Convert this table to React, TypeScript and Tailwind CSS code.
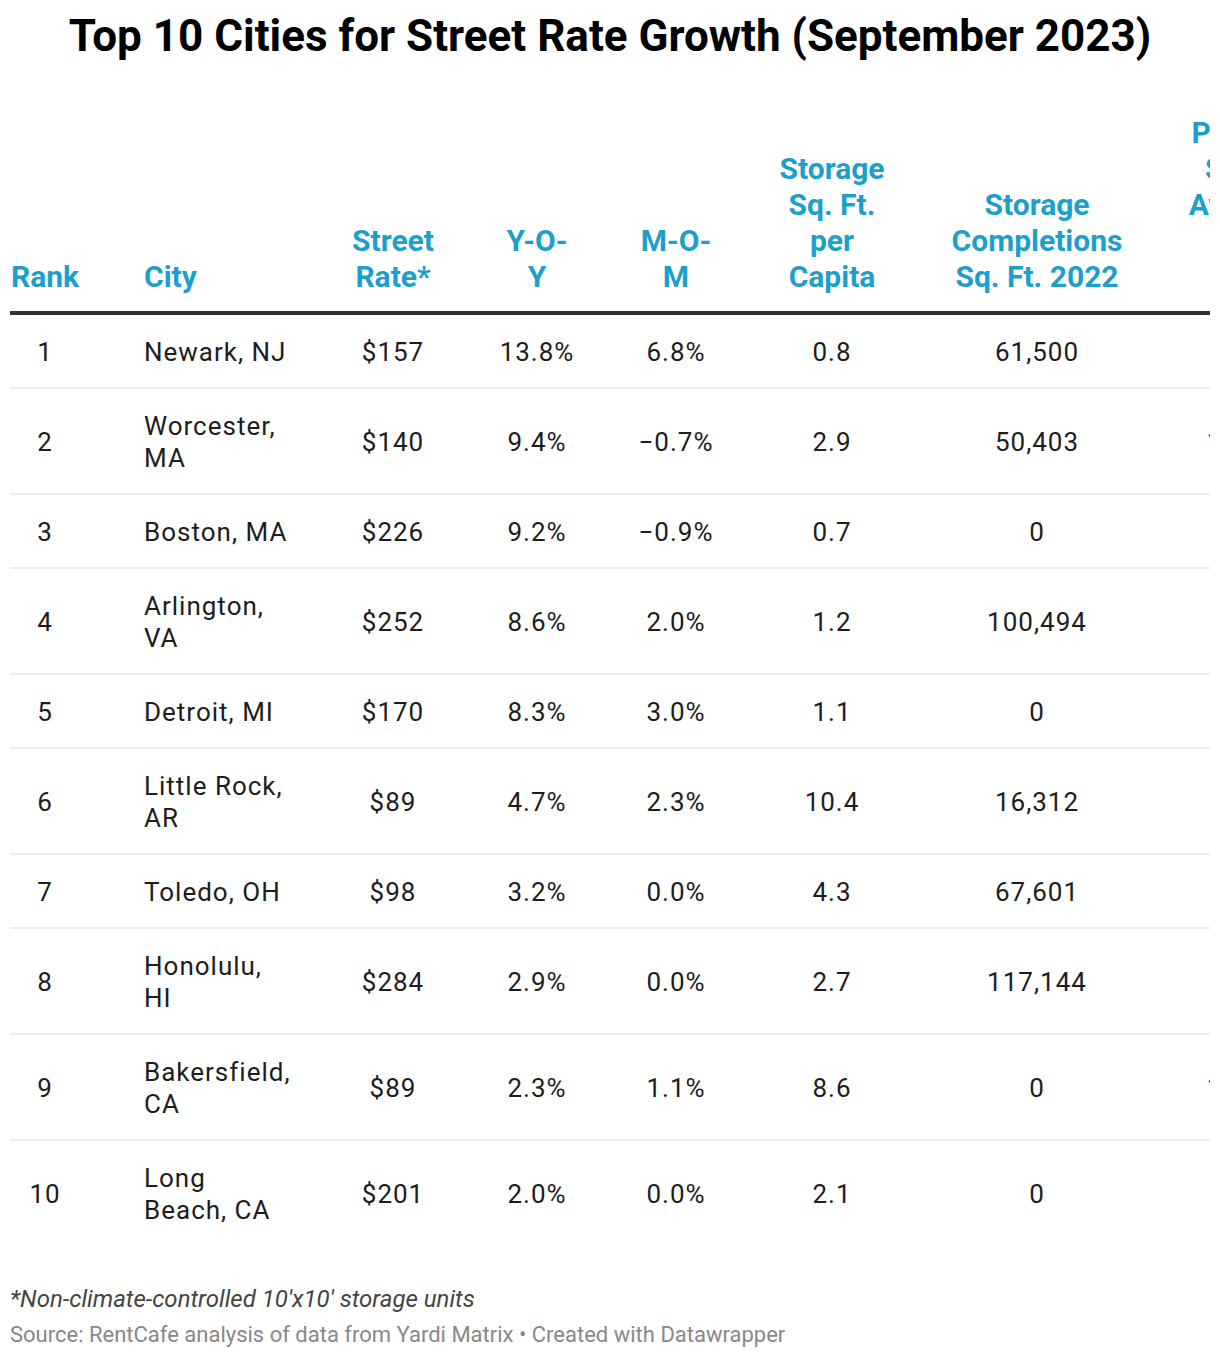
import React from "react";

type Row = {
  rank: string;
  city: string[];
  rate: string;
  yoy: string;
  mom: string;
  perCapita: string;
  completions: string;
  extra: string;
};

const rows: Row[] = [
  { rank: "1", city: ["Newark, NJ"], rate: "$157", yoy: "13.8%", mom: "6.8%", perCapita: "0.8", completions: "61,500", extra: "4.1%" },
  { rank: "2", city: ["Worcester,", "MA"], rate: "$140", yoy: "9.4%", mom: "\u22120.7%", perCapita: "2.9", completions: "50,403", extra: "12.6%" },
  { rank: "3", city: ["Boston, MA"], rate: "$226", yoy: "9.2%", mom: "\u22120.9%", perCapita: "0.7", completions: "0", extra: "2.3%" },
  { rank: "4", city: ["Arlington,", "VA"], rate: "$252", yoy: "8.6%", mom: "2.0%", perCapita: "1.2", completions: "100,494", extra: "5.8%" },
  { rank: "5", city: ["Detroit, MI"], rate: "$170", yoy: "8.3%", mom: "3.0%", perCapita: "1.1", completions: "0", extra: "3.7%" },
  { rank: "6", city: ["Little Rock,", "AR"], rate: "$89", yoy: "4.7%", mom: "2.3%", perCapita: "10.4", completions: "16,312", extra: "6.2%" },
  { rank: "7", city: ["Toledo, OH"], rate: "$98", yoy: "3.2%", mom: "0.0%", perCapita: "4.3", completions: "67,601", extra: "4.9%" },
  { rank: "8", city: ["Honolulu,", "HI"], rate: "$284", yoy: "2.9%", mom: "0.0%", perCapita: "2.7", completions: "117,144", extra: "1.5%" },
  { rank: "9", city: ["Bakersfield,", "CA"], rate: "$89", yoy: "2.3%", mom: "1.1%", perCapita: "8.6", completions: "0", extra: "11.4%" },
  { rank: "10", city: ["Long", "Beach, CA"], rate: "$201", yoy: "2.0%", mom: "0.0%", perCapita: "2.1", completions: "0", extra: "3.3%" },
];

function Head({ lines }: { lines: string[] }) {
  return (
    <th className="align-bottom pb-[16px] text-center text-[30px] font-bold leading-[36px] text-[#1d9fcb]">
      {lines.map((l, i) => (
        <div key={i} className="whitespace-nowrap">
          {l}
        </div>
      ))}
    </th>
  );
}

export default function App() {
  return (
    <div className="w-[1220px] bg-white text-[#1d1d1d]" style={{ fontFamily: "Roboto, 'Liberation Sans', sans-serif" }}>
      <h1 className="pt-[10px] text-center text-[44px] font-bold leading-[53px] text-black">
        Top 10 Cities for Street Rate Growth (September 2023)
      </h1>

      <div className="mx-[10px] mt-[52px] overflow-hidden">
        <table className="w-[1314px] table-fixed border-collapse">
          <colgroup>
            <col className="w-[124px]" />
            <col className="w-[176px]" />
            <col className="w-[166px]" />
            <col className="w-[122px]" />
            <col className="w-[156px]" />
            <col className="w-[156px]" />
            <col className="w-[254px]" />
            <col className="w-[160px]" />
          </colgroup>
          <thead>
            <tr className="border-b-4 border-[#333333]">
              <th className="align-bottom pb-[16px] pl-px text-left text-[30px] font-bold leading-[36px] text-[#1d9fcb]">
                Rank
              </th>
              <th className="align-bottom pb-[16px] pl-[10px] text-left text-[30px] font-bold leading-[36px] text-[#1d9fcb]">
                City
              </th>
              <Head lines={["Street", "Rate*"]} />
              <Head lines={["Y-O-", "Y"]} />
              <Head lines={["M-O-", "M"]} />
              <Head lines={["Storage", "Sq. Ft.", "per", "Capita"]} />
              <Head lines={["Storage", "Completions", "Sq. Ft. 2022"]} />
              <Head lines={["Percent", "Share", "Average", "per", "Unit"]} />
            </tr>
          </thead>
          <tbody className="text-[26px] leading-[32px] tracking-[1px]">
            {rows.map((r, i) => (
              <tr key={r.rank} className={i < rows.length - 1 ? "border-b-2 border-[#eeeeee]" : ""}>
                <td className="pt-[21px] pb-[19px] align-middle">
                  <div className="w-[70px] text-center">{r.rank}</div>
                </td>
                <td className="pt-[21px] pb-[19px] pl-[10px] align-middle">
                  {r.city.map((c, j) => (
                    <div key={j} className="whitespace-nowrap">
                      {c}
                    </div>
                  ))}
                </td>
                <td className="pt-[21px] pb-[19px] text-center align-middle">{r.rate}</td>
                <td className="pt-[21px] pb-[19px] text-center align-middle">{r.yoy}</td>
                <td className="pt-[21px] pb-[19px] text-center align-middle">{r.mom}</td>
                <td className="pt-[21px] pb-[19px] text-center align-middle">{r.perCapita}</td>
                <td className="pt-[21px] pb-[19px] text-center align-middle">{r.completions}</td>
                <td className="pt-[21px] pb-[19px] text-center align-middle">{r.extra}</td>
              </tr>
            ))}
          </tbody>
        </table>
      </div>

      <div className="px-[10px] pt-[36px] pb-[10px]">
        <p className="text-[24px] italic leading-[36px] text-[#444444]">*Non-climate-controlled 10'x10' storage units</p>
        <p className="text-[22px] leading-[36px] text-[#888888]">
          Source: RentCafe analysis of data from Yardi Matrix • Created with Datawrapper
        </p>
      </div>
    </div>
  );
}
